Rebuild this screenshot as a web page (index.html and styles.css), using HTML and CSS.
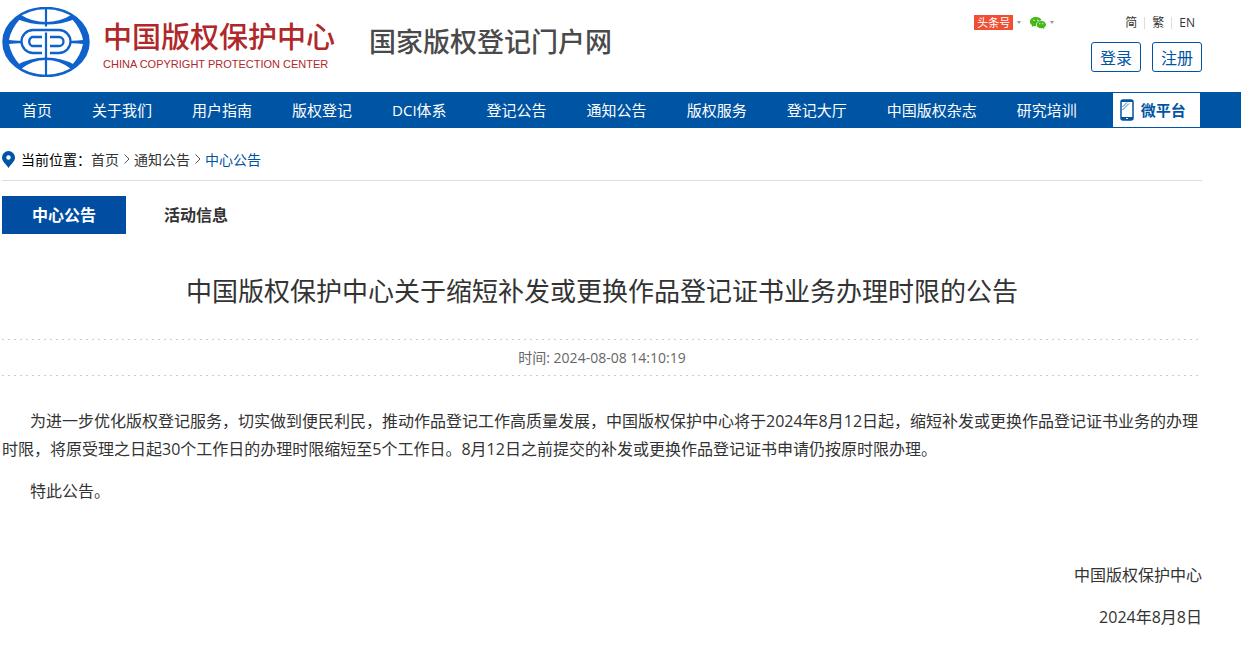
FILE: index.html
```html
<!DOCTYPE html>
<html lang="zh-CN">
<head>
    <meta charset="UTF-8">
    <meta name="viewport" content="width=device-width, initial-scale=1.0">
    <title>中国版权保护中心</title>
    <link rel="stylesheet" href="styles.css">
</head>
<body>
    <header class="header wrap">
        <a class="logo" href="#">
            <svg class="logo-mark" viewBox="0 0 88 70" fill="none" stroke="#0f62cb">
                <ellipse cx="44" cy="35" rx="42.500" ry="34" stroke-width="2.500"/>
                <path d="M44 1v18.500M44 25.500v43" stroke-width="2.200"/>
                <g fill="#0f62cb" stroke="none">
                    <path d="M19 8Q30 15 44 15T69 8L73 12Q60 17.500 44 17.500T15 12Z"/>
                    <path d="M19 62Q30 53 44 53T69 62L73 58Q60 50.500 44 50.500T15 58Z"/>
                    <path d="M20 7Q2 17 1 35Q2 53 20 63L18 58Q9 48 7 37Q13 36 20 36.200V33.800Q13 34 7 33Q9 22 18 12Z"/>
                    <path d="M68 7Q86 17 87 35Q86 53 68 63L70 58Q79 48 81 37Q75 36 68 36.200V33.800Q75 34 81 33Q79 22 70 12Z"/>
                </g>
                <g stroke-width="2.300">
                    <path d="M40 23H31a11.500 11.500 0 0 0 0 23h9"/>
                    <path d="M40 30H30a5 5 0 0 0 0 9h10"/>
                    <path d="M40 23h17a11.500 11.500 0 0 1 0 23h-9"/>
                    <path d="M48 30h9a4.500 4.500 0 0 1 0 9h-9"/>
                </g>
            </svg>
            <span class="logo-text">
                <span class="logo-cn">中国版权保护中心</span>
                <span class="logo-en">CHINA COPYRIGHT PROTECTION CENTER</span>
            </span>
        </a>
        <div class="site-name">国家版权登记门户网</div>
        <div class="header-right">
            <div class="top-links">
                <div class="social">
                    <a class="toutiao" href="#">头条号</a>
                    <span class="caret"></span>
                    <a class="wechat" href="#" aria-label="微信">
                        <svg viewBox="0 0 16 12" width="16" height="12">
                            <path d="M6 0C2.600 0 0 2.100 0 4.700c0 1.500.8 2.700 2.100 3.600L1.600 10l2-1c.8.200 1.600.300 2.400.200C5.400 6 8 3.500 11.700 3.600 11.200 1.500 8.900 0 6 0Z" fill="#45b815"/>
                            <path d="M16 7.700c0-2-2.100-3.600-4.700-3.600S6.600 5.700 6.600 7.700s2.100 3.600 4.700 3.600c.5 0 1-.1 1.500-.2l1.600.9-.4-1.500c1.200-.7 2-1.700 2-2.800Z" fill="#45b815"/>
                            <g fill="#fff"><circle cx="4" cy="3.300" r=".7"/><circle cx="7.800" cy="3.300" r=".7"/><circle cx="9.800" cy="6.700" r=".6"/><circle cx="12.800" cy="6.700" r=".6"/></g>
                        </svg>
                    </a>
                    <span class="caret"></span>
                </div>
                <div class="lang">
                    <a href="#">简</a>
                    <a href="#">繁</a>
                    <a href="#">EN</a>
                </div>
            </div>
            <div class="account">
                <button type="button">登录</button>
                <button type="button">注册</button>
            </div>
        </div>
    </header>

    <nav class="nav">
        <div class="nav-inner wrap">
            <a href="#">首页</a>
            <a href="#">关于我们</a>
            <a href="#">用户指南</a>
            <a href="#">版权登记</a>
            <a href="#">DCI体系</a>
            <a href="#">登记公告</a>
            <a href="#">通知公告</a>
            <a href="#">版权服务</a>
            <a href="#">登记大厅</a>
            <a href="#">中国版权杂志</a>
            <a href="#">研究培训</a>
            <a class="platform" href="#">
                <svg viewBox="0 0 14 22" width="14" height="22">
                    <rect x="1" y="1" width="12" height="20" rx="2" fill="#fff" stroke="#0054a4" stroke-width="1.500"/>
                    <path d="M1 18h12v2q0 1-1 1H2q-1 0-1-1ZM1 3V2q0-1 1-1h10q1 0 1 1v1Z" fill="#0054a4"/>
                    <path d="M2.500 8L7 3.500M2.500 11L9 4.500" stroke="#0054a4" stroke-width=".8"/>
                    <path d="M6 19.500h2" stroke="#fff"/>
                </svg>
                微平台
            </a>
        </div>
    </nav>

    <main class="wrap">
        <div class="breadcrumb">
            <svg class="pin" viewBox="0 0 13 17" width="13" height="17">
                <path d="M6.500 0A6.500 6.500 0 0 0 0 6.500C0 10.500 4 13 6.500 17 9 13 13 10.500 13 6.500A6.500 6.500 0 0 0 6.500 0Z" fill="#0054a4"/>
                <circle cx="6.500" cy="6.500" r="2.200" fill="#fff"/>
            </svg>
            <span class="label">当前位置：</span>
            <a href="#">首页</a>
            <svg class="arrow" viewBox="0 0 6 10" width="6" height="10"><path d="M.5.5L5 5 .5 9.500" fill="none" stroke="#555"/></svg>
            <a href="#">通知公告</a>
            <svg class="arrow" viewBox="0 0 6 10" width="6" height="10"><path d="M.5.5L5 5 .5 9.500" fill="none" stroke="#555"/></svg>
            <a class="current" href="#">中心公告</a>
        </div>

        <div class="tabs">
            <a class="active" href="#">中心公告</a>
            <a href="#">活动信息</a>
        </div>

        <article>
            <h1>中国版权保护中心关于缩短补发或更换作品登记证书业务办理时限的公告</h1>
            <div class="time">时间: 2024-08-08 14:10:19</div>
            <div class="content">
                <p>为进一步优化版权登记服务，切实做到便民利民，推动作品登记工作高质量发展，中国版权保护中心将于2024年8月12日起，缩短补发或更换作品登记证书业务的办理时限，将原受理之日起30个工作日的办理时限缩短至5个工作日。8月12日之前提交的补发或更换作品登记证书申请仍按原时限办理。</p>
                <p>特此公告。</p>
            </div>
            <div class="sign">
                <p>中国版权保护中心</p>
                <p>2024年8月8日</p>
            </div>
        </article>
    </main>
</body>
</html>
```
FILE: styles.css
```css
* {
    margin: 0;
    padding: 0;
    box-sizing: border-box;
}

body {
    font-family: 'Open Sans', 'Noto Sans CJK SC', sans-serif;
    font-size: 14px;
    color: #333;
    background: #fff;
}

a {
    color: inherit;
    text-decoration: none;
}

.wrap {
    max-width: 1200px;
    margin-left: 2px;
}

/* header */
.header {
    display: flex;
    align-items: flex-start;
    height: 92px;
}

.logo {
    display: flex;
    gap: 13px;
    padding-top: 7px;
}

.logo-mark {
    width: 88px;
    height: 70px;
}

.logo-text {
    display: flex;
    flex-direction: column;
    padding-top: 10px;
    color: #b0282a;
}

.logo-cn {
    font-size: 29px;
    font-weight: 500;
    line-height: 40px;
}

.logo-en {
    font-family: 'Liberation Sans', sans-serif;
    font-size: 11px;
    line-height: 14px;
}

.site-name {
    margin-left: 34px;
    padding-top: 22px;
    font-size: 27px;
    font-weight: 500;
    line-height: 40px;
    color: #4a4a4a;
}

.header-right {
    margin-left: auto;
    padding-top: 15px;
}

.top-links {
    display: flex;
    justify-content: flex-end;
    gap: 64px;
    font-size: 12px;
    line-height: 16px;
}

.social {
    display: flex;
    align-items: center;
}

.toutiao {
    padding: 0 3px;
    font-size: 11px;
    line-height: 15px;
    color: #fff;
    background: #f04f35;
}

.caret {
    margin-left: 4px;
    border: 2px solid transparent;
    border-top: 3px solid #999;
    border-bottom: 0;
}

.wechat {
    display: flex;
    margin-left: 9px;
}

.lang {
    display: flex;
    align-items: center;
}

.lang a {
    padding: 0 7px;
    line-height: 12px;
}

.lang a + a {
    border-left: 1px solid #ddd;
}

.account {
    display: flex;
    justify-content: flex-end;
    gap: 11px;
    margin-top: 12px;
}

.account button {
    width: 50px;
    height: 30px;
    font-family: inherit;
    font-size: 16px;
    color: #0054a4;
    background: #fff;
    border: 1px solid #0054a4;
    border-radius: 3px;
    cursor: pointer;
}

/* nav */
.nav {
    background: #0054a4;
}

.nav-inner {
    display: flex;
    align-items: center;
    height: 36px;
}

.nav a {
    padding: 0 20px;
    font-size: 15px;
    line-height: 34px;
    color: #fff;
    white-space: nowrap;
}

.nav .platform {
    display: flex;
    align-items: center;
    gap: 7px;
    margin-left: 16px;
    padding: 0 14px 0 7px;
    font-weight: bold;
    color: #0054a4;
    background: #fff;
}

/* breadcrumb */
.breadcrumb {
    display: flex;
    align-items: center;
    height: 53px;
    padding-top: 10px;
    border-bottom: 1px solid #ddd;
}

.breadcrumb .label {
    margin-left: 6px;
    color: #000;
}

.arrow {
    margin: 0 4px 0 5px;
}

.breadcrumb .current {
    color: #0054a4;
}

/* tabs */
.tabs {
    display: flex;
    gap: 8px;
    margin-top: 15px;
}

.tabs a {
    padding: 0 30px;
    font-size: 16px;
    font-weight: bold;
    line-height: 38px;
}

.tabs .active {
    color: #fff;
    background: #004da1;
}

/* article */
h1 {
    margin-top: 37px;
    font-size: 26px;
    font-weight: normal;
    line-height: 40px;
    text-align: center;
}

.time {
    margin-top: 28px;
    padding: 1px 0;
    line-height: 35px;
    text-align: center;
    color: #666;
    background-image: linear-gradient(to right, #ccc 2px, transparent 2px), linear-gradient(to right, #ccc 2px, transparent 2px);
    background-size: 6px 1px;
    background-position: 0 0, 0 100%;
    background-repeat: repeat-x;
}

.content {
    margin-top: 31px;
    font-size: 16px;
    line-height: 28px;
}

.content p {
    margin-bottom: 14px;
    text-indent: 28px;
}

.sign {
    margin-top: 56px;
    font-size: 16px;
    line-height: 28px;
    text-align: right;
}

.sign p {
    margin-bottom: 14px;
}
```
